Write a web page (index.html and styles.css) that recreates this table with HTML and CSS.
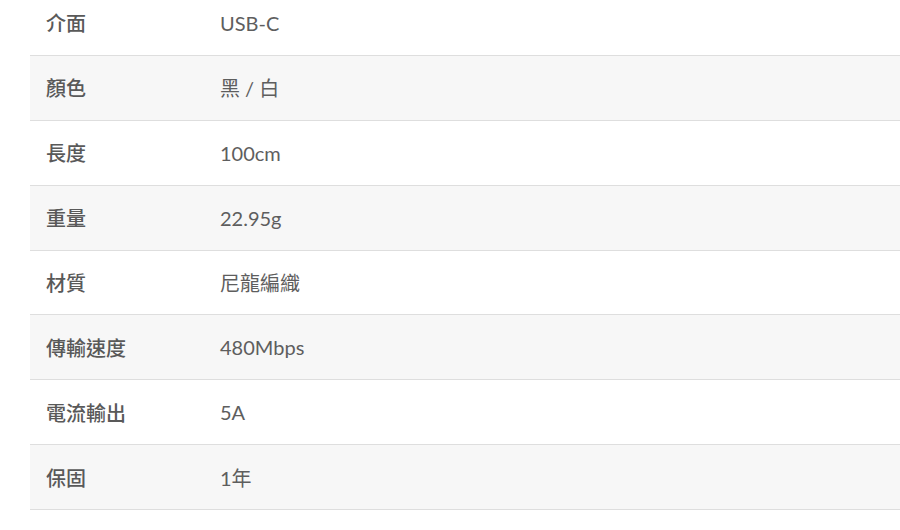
FILE: index.html
```html
<!DOCTYPE html>
<html lang="zh-Hant">
<head>
    <meta charset="UTF-8">
    <meta name="viewport" content="width=device-width, initial-scale=1.0">
    <title>產品規格</title>
    <link rel="stylesheet" href="styles.css">
</head>
<body>
    <div class="specs">
        <table class="spec-table">
            <tr><th>介面</th><td>USB-C</td></tr>
            <tr><th>顏色</th><td>黑 / 白</td></tr>
            <tr><th>長度</th><td>100cm</td></tr>
            <tr><th>重量</th><td>22.95g</td></tr>
            <tr><th>材質</th><td>尼龍編織</td></tr>
            <tr><th>傳輸速度</th><td>480Mbps</td></tr>
            <tr><th>電流輸出</th><td>5A</td></tr>
            <tr><th>保固</th><td>1年</td></tr>
        </table>
    </div>
</body>
</html>
```

FILE: styles.css
```css
body {
    margin: 0;
    background-color: white;
    font-family: Lato, "Noto Sans CJK TC", sans-serif;
    color: #555;
    overflow: hidden;
}

.specs {
    margin: -9.4px 0 0 30px;
}

.spec-table {
    width: 100%;
    border-collapse: collapse;
    font-size: 20px;
}

.spec-table tr {
    height: 64.86px;
    border-bottom: 1px solid #dedede;
}

.spec-table tr:nth-child(even) {
    background: #f7f7f7;
}

.spec-table th {
    width: 158px;
    padding: 0 0 0 16px;
    text-align: left;
    font-family: "Noto Sans CJK TC", sans-serif;
    font-weight: 500;
    color: #595959;
}

.spec-table td {
    padding: 0 16px;
    color: #5e5e5e;
}
```
